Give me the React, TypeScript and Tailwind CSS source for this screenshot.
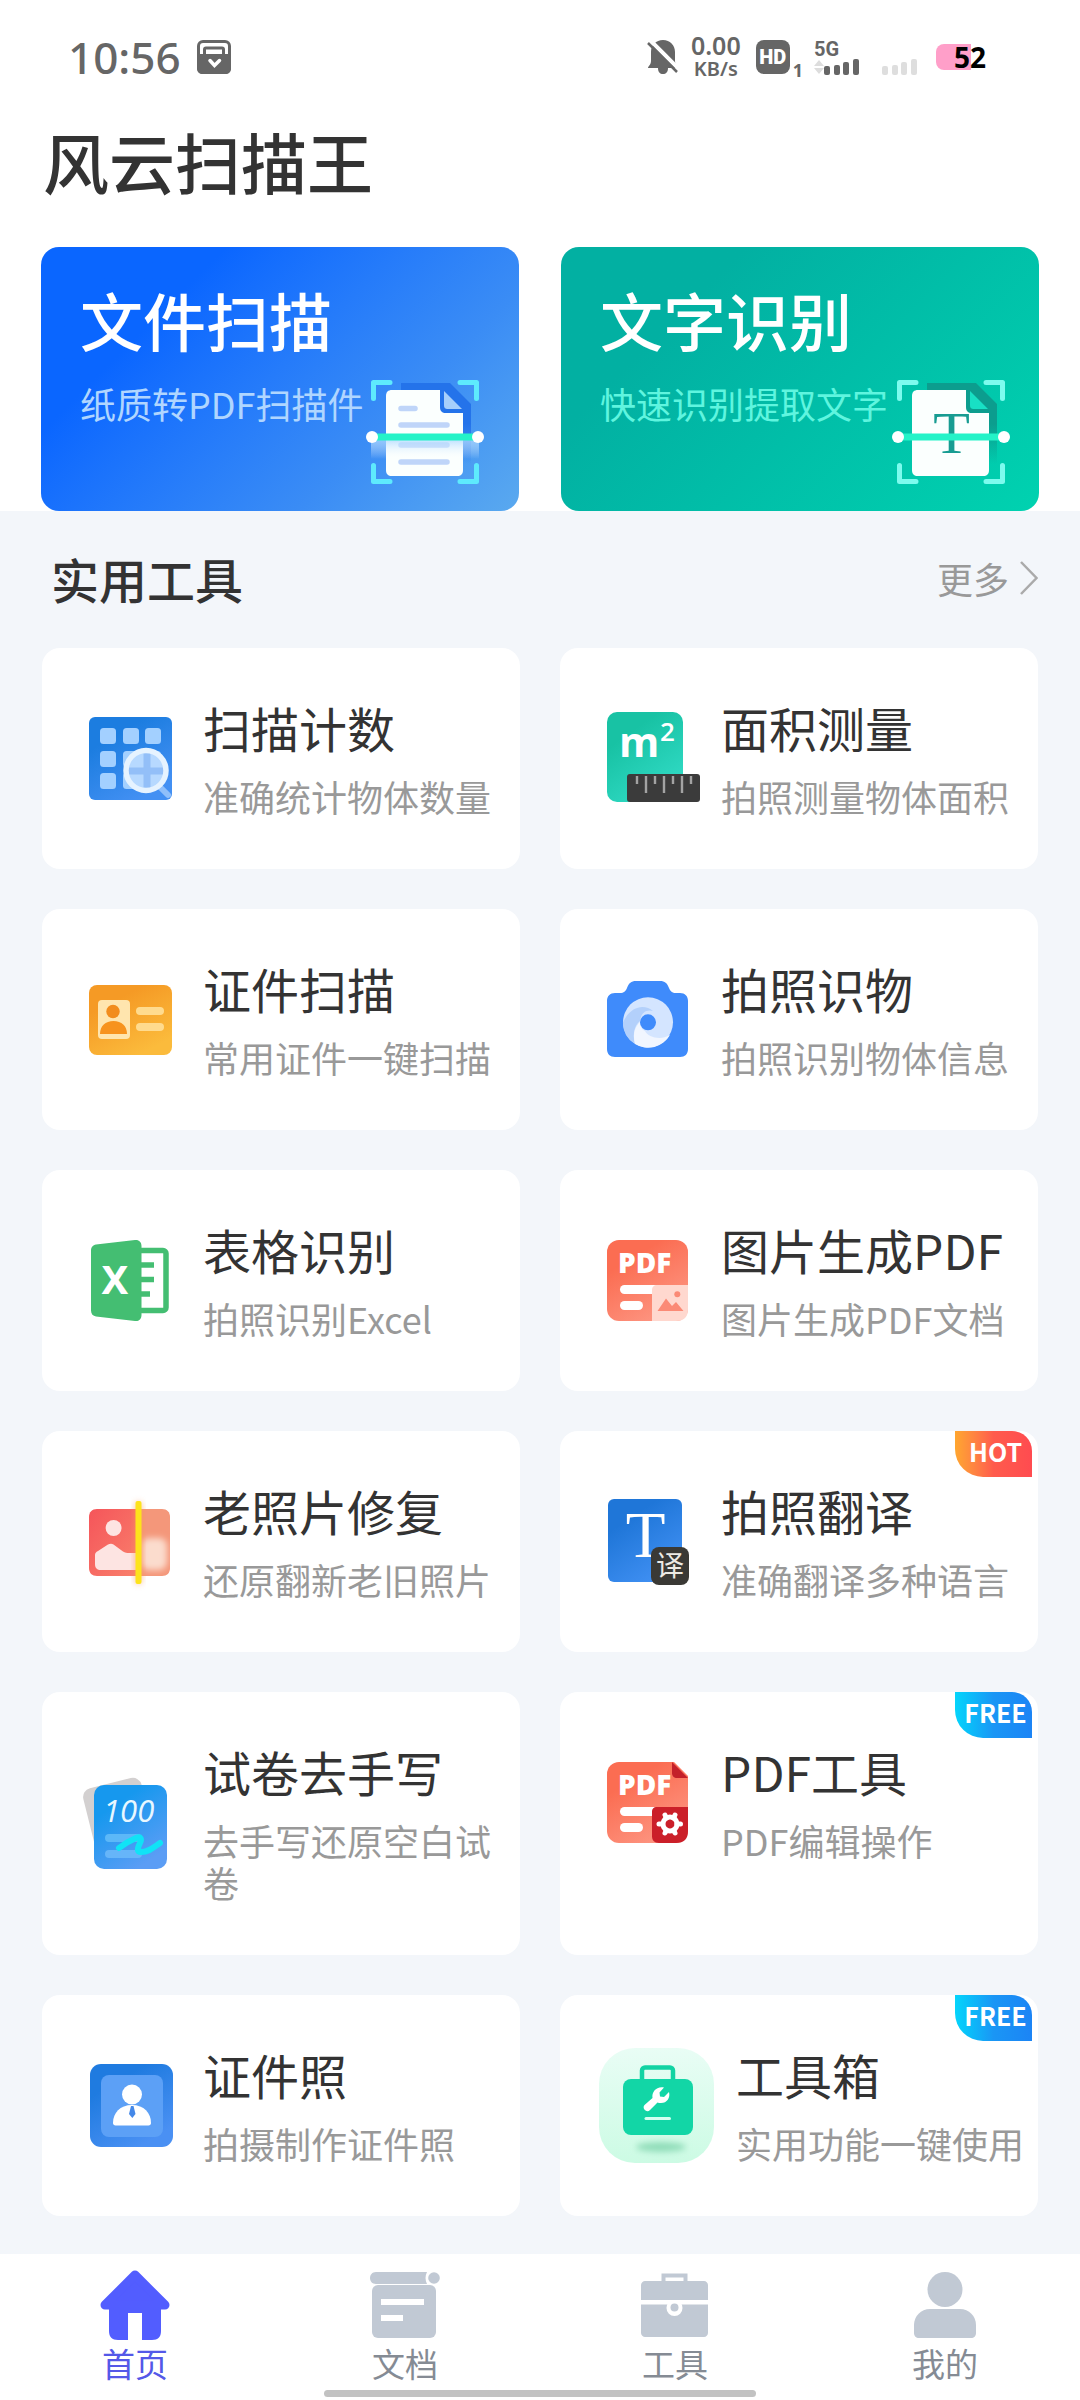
import type { ReactNode } from 'react';
import clsx from 'clsx';

type Tool = {
    title: string;
    desc: string;
    icon: ReactNode;
    badge?: 'HOT' | 'FREE';
};

function ToolSvg({ children }: { children: ReactNode }) {
    return (
        <svg viewBox="0 0 108 109" className="mr-[14px] h-[109px] w-[108px] shrink-0" aria-hidden="true">
            {children}
        </svg>
    );
}

function Gradient({ id, from, to }: { id: string; from: string; to: string }) {
    return (
        <linearGradient id={id} x1="0" y1="0" x2="0.6" y2="1">
            <stop offset="0.3" stopColor={from} />
            <stop offset="1" stopColor={to} />
        </linearGradient>
    );
}

function CountIcon() {
    const cells = [
        [19, 24],
        [42, 24],
        [64, 24],
        [19, 47],
        [42, 47],
        [64, 47],
        [19, 69],
        [42, 69],
    ];
    return (
        <ToolSvg>
            <defs>
                <Gradient id="count-bg" from="#1c7de0" to="#4390f3" />
            </defs>
            <rect x="8" y="13" width="83" height="83" rx="6" fill="url(#count-bg)" />
            {cells.map(([x, y]) => (
                <rect key={`${x}-${y}`} x={x} y={y} width="16" height="16" rx="3.5" fill="#a3d0ff" />
            ))}
            <path d="M80 84L87 91" stroke="#8fbffa" strokeWidth="6" strokeLinecap="round" />
            <circle cx="65" cy="66.5" r="20.5" fill="#b7d9ff" />
            <path d="M66 48v37M47 67h36" stroke="#93bff8" strokeWidth="7" />
            <circle cx="65" cy="66.5" r="20" fill="none" stroke="#e6f3ff" strokeWidth="5.5" />
        </ToolSvg>
    );
}

function AreaIcon() {
    return (
        <ToolSvg>
            <defs>
                <Gradient id="area-bg" from="#18c2a4" to="#30dac4" />
            </defs>
            <rect x="8" y="8" width="76" height="90" rx="10" fill="url(#area-bg)" />
            <text x="20" y="53" fontSize="41" className="fill-white font-['Open_Sans',sans-serif] font-bold">
                m
            </text>
            <text x="61" y="37" fontSize="26" className="fill-white font-['Open_Sans',sans-serif] font-semibold">
                2
            </text>
            <rect x="28" y="70" width="73" height="28" rx="3" fill="#3b3b3b" />
            <path
                d="M38 72v8M56 72v8M74 72v8M92 72v8M47 72v17M65 72v17M83 72v17"
                stroke="#a3a3a3"
                strokeWidth="2.4"
            />
        </ToolSvg>
    );
}

function LicenceIcon() {
    return (
        <ToolSvg>
            <defs>
                <Gradient id="licence-bg" from="#f59a25" to="#fbbb3c" />
            </defs>
            <rect x="8" y="20" width="83" height="70" rx="8" fill="url(#licence-bg)" />
            <rect x="17" y="35" width="32" height="39" rx="4" fill="#ffe5ae" />
            <circle cx="32" cy="46.5" r="6.7" fill="#f28c1c" />
            <path d="M19 69c0-8 5.500-13 13.500-13S46 61 46 69z" fill="#f7931e" />
            <rect x="55" y="42" width="28" height="8" rx="4" fill="#ffdb8e" />
            <rect x="55" y="58" width="28" height="8" rx="4" fill="#ffdb8e" />
        </ToolSvg>
    );
}

function CameraIcon() {
    return (
        <ToolSvg>
            <path
                d="M16 28h5c4 0 5.500-1.500 7-5 2-5 4-7 9-7h24c5 0 7 2 9 7 1.500 3.500 3 5 7 5h4c5 0 8 3 8 8v48c0 5-3 8-8 8H16c-5 0-8-3-8-8V36c0-5 3-8 8-8z"
                fill="#3f8bfb"
            />
            <circle cx="49" cy="57.3" r="25" fill="#d4e5ff" />
            <path d="M24 57.300A25 25 0 0 0 36 79c-4-14 3-22 5-23 1-8 6-12 13-10-8-7-22-6-30 11.300z" fill="#b3d0fb" />
            <path d="M36 79a25 25 0 0 0 35-9c-10 6-22 2-25-4-4-2-5-6-5-9-4 4-8 10-5 22z" fill="#f1f6ff" />
            <circle cx="49" cy="57.3" r="8" fill="#3f8bfb" />
        </ToolSvg>
    );
}

function ExcelIcon() {
    return (
        <ToolSvg>
            <rect x="50" y="24.500" width="35" height="60" rx="3" fill="#fff" stroke="#44be72" strokeWidth="5.500" />
            <path d="M60 39h13M60 53.500h13M60 68h9" stroke="#44be72" strokeWidth="5.500" />
            <path
                d="M15 18.500L54 14c4-.400 6.500 2 6.500 6v69c0 4-2.500 6.500-6.500 6L15 90.500c-3-.500-5-2.500-5-6V25c0-4 2-6 5-6.500z"
                fill="#44be72"
            />
            <text
                x="34"
                y="68"
                fontSize="40"
                textAnchor="middle"
                className="fill-white font-['Noto_Sans',sans-serif] font-bold"
            >
                X
            </text>
        </ToolSvg>
    );
}

function PdfBase({ id }: { id: string }) {
    return (
        <>
            <defs>
                <Gradient id={id} from="#fb6d52" to="#fd9480" />
            </defs>
            <rect x="8" y="14" width="81" height="81" rx="12" fill={`url(#${id})`} />
            <rect x="21" y="59" width="45" height="9" rx="4.5" fill="#fff" />
            <rect x="21" y="75" width="23" height="9" rx="4.5" fill="#fff" />
            <text x="19" y="47" fontSize="28" className="fill-white font-['Open_Sans',sans-serif] font-extrabold">
                PDF
            </text>
        </>
    );
}

function ImageToPdfIcon() {
    return (
        <ToolSvg>
            <PdfBase id="image-pdf-bg" />
            <path d="M58 59h31v24c0 8-4 12-12 12H53V64c0-3 2-5 5-5z" fill="#ffd8cf" />
            <circle cx="78.300" cy="68.300" r="3" fill="#fb8a76" />
            <path d="M58.500 85L67 72.500 73 80l4-4 7.500 9z" fill="#fb8a76" />
        </ToolSvg>
    );
}

function PdfToolIcon() {
    return (
        <ToolSvg>
            <PdfBase id="pdf-tool-bg" />
            <path d="M73 12h18v18z" fill="#fff" />
            <path d="M73 14v11c0 3 2 5 5 5h11z" fill="#c4202a" />
            <path d="M57 59h32v24c0 8-4 12-12 12H60c-5 0-7-3-7-7V63c0-2 2-4 4-4z" fill="#cb1f29" />
            <circle cx="71" cy="76" r="7" fill="none" stroke="#fff" strokeWidth="5" />
            <path
                d="M78 76h3.500M62.500 76H60M74.500 82l1.500 3M66 67l1.500 3M74.500 70l1.500-3M66 85l1.500-3"
                stroke="#fff"
                strokeWidth="5"
                strokeLinecap="round"
            />
        </ToolSvg>
    );
}

function PhotoRepairIcon() {
    return (
        <ToolSvg>
            <defs>
                <filter id="repair-blur" x="-50%" y="-50%" width="200%" height="200%">
                    <feGaussianBlur stdDeviation="3" />
                </filter>
                <linearGradient id="repair-left" x1="0" y1="0" x2="1" y2="1">
                    <stop offset="0" stopColor="#f5555a" />
                    <stop offset="1" stopColor="#f9806c" />
                </linearGradient>
                <clipPath id="repair-clip">
                    <rect x="57" y="22" width="32" height="67" rx="8" />
                </clipPath>
            </defs>
            <path d="M57 22h24c5 0 8 3 8 8v51c0 5-3 8-8 8H57z" fill="#f4977a" />
            <g clipPath="url(#repair-clip)">
                <rect x="60" y="51" width="26" height="32" rx="8" fill="#fbdccd" filter="url(#repair-blur)" />
            </g>
            <path d="M16 22h41v67H16c-5 0-8-3-8-8V30c0-5 3-8 8-8z" fill="url(#repair-left)" />
            <circle cx="32.600" cy="41" r="8" fill="#fde4e2" />
            <path d="M14 68c0-2 1-3 3-4l10-6.500c2-1 4-1 5.500 0L42 64.500c2 1.300 4 1.500 6 1.500h9v17H20c-4 0-6-2-6-6z" fill="#fde4e2" />
            <rect x="54" y="15" width="7" height="82" rx="3" fill="#fb9a5a" opacity="0.600" filter="url(#repair-blur)" />
            <rect x="54.500" y="14" width="6" height="83" rx="2" fill="#fde31c" />
        </ToolSvg>
    );
}

function TranslateIcon() {
    return (
        <ToolSvg>
            <defs>
                <Gradient id="translate-bg" from="#1f76d8" to="#3f8ff2" />
            </defs>
            <rect x="9" y="12" width="74" height="83" rx="6" fill="url(#translate-bg)" />
            <text
                x="46.500"
                y="69.500"
                fontSize="65"
                textAnchor="middle"
                className="fill-white font-['Liberation_Serif',serif]"
            >
                T
            </text>
            <rect x="52" y="60" width="38" height="38" rx="8" fill="#3a3935" />
            <text
                x="71"
                y="89"
                fontSize="28"
                textAnchor="middle"
                className="fill-[#eceae4] font-['Noto_Sans_CJK_SC',sans-serif]"
            >
                译
            </text>
        </ToolSvg>
    );
}

function PaperIcon() {
    return (
        <ToolSvg>
            <defs>
                <Gradient id="paper-bg" from="#1698ee" to="#5b9df5" />
            </defs>
            <rect x="9" y="13" width="60" height="80" rx="9" fill="#d3d0d0" transform="rotate(-14 39 53)" />
            <rect x="13" y="16" width="73" height="84" rx="10" fill="url(#paper-bg)" />
            <text x="22" y="53" fontSize="31" className="fill-[#e8f7ff] font-['Open_Sans',sans-serif] font-medium italic">
                100
            </text>
            <rect x="24" y="65" width="37" height="8" rx="4" fill="#5cb8f8" />
            <rect x="24" y="81" width="37" height="8" rx="4" fill="#66b5f9" />
            <path
                d="M38 79c5-4 10-7 17-10 5-2 6 1 4 5-3 6-3 9 1 9 8 0 13-5 19-9"
                fill="none"
                stroke="#10e3f6"
                strokeWidth="6"
                strokeLinecap="round"
                strokeLinejoin="round"
            />
        </ToolSvg>
    );
}

function IdPhotoIcon() {
    return (
        <ToolSvg>
            <defs>
                <Gradient id="id-photo-bg" from="#1f7be0" to="#4a90f3" />
            </defs>
            <rect x="9" y="13" width="83" height="83" rx="11" fill="url(#id-photo-bg)" />
            <rect x="20" y="24" width="62" height="62" rx="8" fill="#5ca0f6" />
            <circle cx="51" cy="43.500" r="10" fill="#fff" />
            <path d="M32 72c0-10 7-18 19-18s19 8 19 18c0 1.500-1 2.500-2.500 2.500h-33c-1.500 0-2.500-1-2.500-2.500z" fill="#fff" />
            <path d="M50 55h2.500l2 8-3.200 4-3.300-4z" fill="#4488e8" />
        </ToolSvg>
    );
}

function ToolboxIcon() {
    return (
        <svg viewBox="0 0 123 115" className="mr-[14px] h-[115px] w-[123px] shrink-0" aria-hidden="true">
            <defs>
                <linearGradient id="toolbox-bg" x1="0" y1="0" x2="0" y2="1">
                    <stop offset="0" stopColor="#e9fdf5" />
                    <stop offset="1" stopColor="#ccfbe4" />
                </linearGradient>
                <filter id="toolbox-blur" x="-50%" y="-100%" width="200%" height="300%">
                    <feGaussianBlur stdDeviation="3" />
                </filter>
            </defs>
            <rect width="115" height="115" rx="36" fill="url(#toolbox-bg)" />
            <ellipse cx="62" cy="99" rx="25" ry="5" fill="#8fdcb8" filter="url(#toolbox-blur)" />
            <rect x="43" y="19.500" width="31" height="26" rx="3" fill="none" stroke="#12d3a3" strokeWidth="4.500" />
            <rect x="24" y="31" width="70" height="56" rx="8" fill="#12d6a6" />
            <path
                d="M65 39.500l-4.500 5 .5 4 4 .5 5-5c1.500 6-2 11-8 11-1.500 0-2.500-.3-3.500-.6L51 62c-3 3.500-8.500-1.500-5.500-5l8-7c-1-6 4-12 11.500-10.500z"
                fill="#fff"
            />
            <path d="M47 70.500h23.500" stroke="#d5fff2" strokeWidth="3" strokeLinecap="round" />
        </svg>
    );
}

const TOOLS: Tool[] = [
    { title: '扫描计数', desc: '准确统计物体数量', icon: <CountIcon /> },
    { title: '面积测量', desc: '拍照测量物体面积', icon: <AreaIcon /> },
    { title: '证件扫描', desc: '常用证件一键扫描', icon: <LicenceIcon /> },
    { title: '拍照识物', desc: '拍照识别物体信息', icon: <CameraIcon /> },
    { title: '表格识别', desc: '拍照识别Excel', icon: <ExcelIcon /> },
    { title: '图片生成PDF', desc: '图片生成PDF文档', icon: <ImageToPdfIcon /> },
    { title: '老照片修复', desc: '还原翻新老旧照片', icon: <PhotoRepairIcon /> },
    { title: '拍照翻译', desc: '准确翻译多种语言', icon: <TranslateIcon />, badge: 'HOT' },
    { title: '试卷去手写', desc: '去手写还原空白试卷', icon: <PaperIcon /> },
    { title: 'PDF工具', desc: 'PDF编辑操作', icon: <PdfToolIcon />, badge: 'FREE' },
    { title: '证件照', desc: '拍摄制作证件照', icon: <IdPhotoIcon /> },
    { title: '工具箱', desc: '实用功能一键使用', icon: <ToolboxIcon />, badge: 'FREE' },
];

function ToolCard({ title, desc, icon, badge }: Tool) {
    return (
        <a href="#" className="relative flex items-start rounded-[18px] bg-white">
            <div className="flex min-w-0 flex-1 items-center py-[47px] pl-[39px] pr-3">
                {icon}
                <div className="min-w-0 flex-1 pb-[5px]">
                    <h3 className="text-[48px] leading-[64px] text-[#333]">{title}</h3>
                    <p className="mt-4 text-[36px] leading-[42px] text-[#999]">{desc}</p>
                </div>
            </div>
            {badge && (
                <span
                    className={clsx(
                        'absolute right-[6px] top-0 flex h-[46px] w-[77px] items-center justify-center rounded-bl-[28px] rounded-tr-[20px] bg-linear-to-r pb-1 pl-1 text-[25px] font-bold text-white',
                        badge === 'HOT' ? 'from-[#ffa62e] via-[#ff5b4c] to-[#ff4b50]' : 'from-[#05d5fb] via-[#1a96f5] to-[#1c84f5]'
                    )}
                >
                    {badge}
                </span>
            )}
        </a>
    );
}

function ScanFrame({ variant }: { variant: 'doc' | 'text' }) {
    const isDoc = variant === 'doc';
    return (
        <svg viewBox="0 0 118 108" className="h-[108px] w-[118px]" aria-hidden="true">
            <defs>
                <linearGradient id={`scan-shade-${variant}`} x1="0" y1="0" x2="0" y2="1">
                    <stop offset="0" stopColor={isDoc ? '#2473ea' : '#0c9d8e'} />
                    <stop offset="0.500" stopColor={isDoc ? '#2473ea' : '#0c9d8e'} />
                    <stop offset="1" stopColor={isDoc ? '#2473ea' : '#0c9d8e'} stopOpacity="0" />
                </linearGradient>
                <linearGradient id={`scan-glow-${variant}`} x1="0" y1="0" x2="0" y2="1">
                    <stop offset="0" stopColor="#a8d6ff" stopOpacity="0.800" />
                    <stop offset="1" stopColor="#fff" stopOpacity="0" />
                </linearGradient>
            </defs>
            <path d="M35 4h49l21 21v60H35z" fill={`url(#scan-shade-${variant})`} />
            <path d="M26 11h48v17c0 4 2 6 6 6h17v57c0 4-2 6-6 6H26c-4 0-6-2-6-6V17c0-4 2-6 6-6z" fill="#fbfffe" />
            <path d="M78 12l18 18H82c-3 0-4-1-4-4z" fill={isDoc ? '#a6cffb' : '#18e0c4'} />
            {isDoc ? (
                <>
                    <path
                        d="M35 29.500h14M35 46h46M35 66h46M35 83h46"
                        stroke="#bfd5f9"
                        strokeWidth="5.500"
                        strokeLinecap="round"
                    />
                    <rect x="5" y="60" width="108" height="20" fill="url(#scan-glow-doc)" />
                </>
            ) : (
                <text
                    x="59.500"
                    y="74"
                    fontSize="60"
                    textAnchor="middle"
                    className="fill-[#189c92] font-['Liberation_Serif',serif]"
                >
                    T
                </text>
            )}
            <path
                d="M7.500 19.500V3.500H24M94 3.500h16.500v16M7.500 86.500v16H24M94 102.500h16.500v-16"
                fill="none"
                stroke={isDoc ? '#5eeafd' : '#7dfbee'}
                strokeWidth="5"
                strokeLinecap="round"
                strokeLinejoin="round"
            />
            <path d="M6 58h106" stroke="#24f3c8" strokeWidth="7" />
            <circle cx="6" cy="58" r="6" fill="#fff" />
            <circle cx="112" cy="58" r="6" fill="#fff" />
        </svg>
    );
}

function Battery() {
    return (
        <div className="relative flex h-[26px] w-[50px] items-center justify-end">
            <div className="absolute inset-y-0 left-0 w-[35px] rounded-l-[8px] bg-[#ff9fc9]" />
            <span className="relative font-['Noto_Sans',sans-serif] text-[28px] font-bold leading-[26px] text-black">52</span>
        </div>
    );
}

function SignalBars({ color }: { color: string }) {
    return (
        <g fill={color}>
            <rect x="10" y="27" width="6" height="9" rx="2" />
            <rect x="20" y="26" width="6" height="10" rx="2" />
            <rect x="29" y="23" width="6" height="13" rx="2" />
            <rect x="39" y="20" width="6" height="16" rx="2" />
        </g>
    );
}

function StatusBar() {
    return (
        <div className="flex h-[80px] items-center justify-between pl-[68px] pr-[94px] pt-[34px] text-[#666]">
            <div className="flex items-center gap-[16px]">
                <span className="font-['Noto_Sans',sans-serif] text-[44px] font-medium leading-[46px]">10:56</span>
                <svg viewBox="0 0 34 34" className="h-[34px] w-[34px]" aria-hidden="true">
                    <rect x="1.500" y="1.500" width="31" height="31" rx="4.500" fill="none" stroke="#666" strokeWidth="3" />
                    <path d="M0 14h34v14c0 4-2 6-6 6H6c-4 0-6-2-6-6z" fill="#666" />
                    <path d="M7.500 15V9.500c0-1 .5-1.500 1.500-1.500h16c1 0 1.500.5 1.500 1.500V15" fill="none" stroke="#666" strokeWidth="3" />
                    <path d="M13 20.500l4.500 5 5-5" fill="none" stroke="#fff" strokeWidth="3.500" strokeLinecap="round" />
                </svg>
            </div>
            <div className="flex items-center">
                <svg viewBox="0 0 32 34" className="mr-[12px] h-[34px] w-[32px]" aria-hidden="true">
                    <path
                        d="M16 0c7 0 12 5 12 12v9c0 4 3 5 3 7H21c0 4-2 6-5 6s-5-2-5-6H1c0-2 3-3 3-7v-9C4 5 9 0 16 0z"
                        fill="#666"
                    />
                    <path d="M3 0l29 29" stroke="#fff" strokeWidth="4" />
                    <path d="M1 3l29 29" stroke="#666" strokeWidth="2.500" />
                </svg>
                <div className="mr-[15px] flex flex-col items-center font-['Noto_Sans',sans-serif] font-semibold">
                    <span className="text-[25px] leading-[24px]">0.00</span>
                    <span className="text-[20px] leading-[24px]">KB/s</span>
                </div>
                <div className="flex h-[34px] w-[34px] items-center justify-center rounded-[8px] bg-[#666] font-['Roboto',sans-serif] text-[20px] font-black text-white">
                    HD
                </div>
                <span className="ml-[3px] self-end font-['Noto_Sans',sans-serif] text-[18px] font-bold leading-[22px]">1</span>
                <svg viewBox="0 0 46 36" className="ml-[11px] h-[36px] w-[46px]" aria-hidden="true">
                    <text x="0" y="17" fontSize="20" fill="#666" className="font-['Roboto',sans-serif] font-bold">
                        5G
                    </text>
                    <path d="M5 21l5 6H0zM5 35l5-6H0z" fill="#ddd" />
                    <SignalBars color="#666" />
                </svg>
                <svg viewBox="0 0 46 36" className="ml-[12px] h-[36px] w-[46px]" aria-hidden="true">
                    <SignalBars color="#dedede" />
                </svg>
                <div className="ml-[18px]">
                    <Battery />
                </div>
            </div>
        </div>
    );
}

const TABS = [
    {
        label: '首页',
        icon: (
            <>
                <path
                    d="M36 5L66 35H6z"
                    fill="#525dff"
                    stroke="#525dff"
                    strokeWidth="9"
                    strokeLinejoin="round"
                />
                <path d="M10 32h52v29c0 6-3 9-9 9H43V43H29v27H19c-6 0-9-3-9-9z" fill="#525dff" />
            </>
        ),
    },
    {
        label: '文档',
        icon: (
            <>
                <path d="M7 2h51c-2 4-2 8 0 12H7C-1 14-1 2 7 2z" fill="#c1c9d4" />
                <circle cx="65" cy="8" r="5.800" fill="#c1c9d4" />
                <rect x="3" y="15" width="64" height="53" rx="6" fill="#c1c9d4" />
                <path d="M12 32h43M12 48h22" stroke="#fff" strokeWidth="6" />
            </>
        ),
    },
    {
        label: '工具',
        icon: (
            <>
                <rect x="24.500" y="5.500" width="22" height="12" fill="none" stroke="#c1c9d4" strokeWidth="4" />
                <path d="M6 11h59c2 0 4 2 4 4v15H2V15c0-2 2-4 4-4z" fill="#c1c9d4" />
                <path d="M2 34.500h67V63c0 2-2 4-4 4H6c-2 0-4-2-4-4z" fill="#c1c9d4" />
                <circle cx="35.500" cy="38" r="8" fill="#fff" />
                <circle cx="35.500" cy="37.500" r="4" fill="#c1c9d4" />
            </>
        ),
    },
    {
        label: '我的',
        icon: (
            <>
                <circle cx="36" cy="19.500" r="17.500" fill="#c1c9d4" />
                <path d="M21 39h30c9 0 16 7 16 16v8c0 3-2 5-5 5H10c-3 0-5-2-5-5v-8c0-9 7-16 16-16z" fill="#c1c9d4" />
            </>
        ),
    },
];

export default function App() {
    return (
        <div className="flex min-h-screen flex-col bg-[#f3f6fa] font-['Noto_Sans_CJK_SC',sans-serif]">
            <header className="bg-white">
                <StatusBar />
                <h1 className="mb-[47px] mt-[40px] px-[43px] text-[66px] font-medium leading-[80px] text-[#333]">
                    风云扫描王
                </h1>
                <div className="grid grid-cols-2 gap-[42px] px-[41px]">
                    <a
                        href="#"
                        className="relative h-[264px] rounded-[18px] bg-linear-135 from-[#0a66ff] from-25% via-[#3a8cf5] via-70% to-[#5aa9ef] pl-[39px] pt-8"
                    >
                        <h2 className="text-[63px] font-medium leading-[80px] text-white">文件扫描</h2>
                        <p className="mt-[23px] text-[36px] leading-[42px] text-[#b0d6ff]">纸质转PDF扫描件</p>
                        <div className="absolute bottom-6 right-[35px]">
                            <ScanFrame variant="doc" />
                        </div>
                    </a>
                    <a
                        href="#"
                        className="relative h-[264px] rounded-[18px] bg-linear-135 from-[#02b0a2] from-25% to-[#00d2b0] pl-[39px] pt-8"
                    >
                        <h2 className="text-[63px] font-medium leading-[80px] text-white">文字识别</h2>
                        <p className="mt-[23px] text-[36px] leading-[42px] text-[#5ff5df]">快速识别提取文字</p>
                        <div className="absolute bottom-6 right-[29px]">
                            <ScanFrame variant="text" />
                        </div>
                    </a>
                </div>
            </header>

            <main className="px-[42px] pb-[38px]">
                <div className="flex items-center justify-between pb-[38px] pl-[9px] pt-[35px]">
                    <h2 className="text-[48px] font-medium leading-[64px] text-[#333]">实用工具</h2>
                    <a href="#" className="flex items-center gap-[11px] text-[36px] leading-[42px] text-[#999]">
                        更多
                        <svg viewBox="0 0 18 34" className="h-[34px] w-[18px]" aria-hidden="true">
                            <path d="M1 1l15.500 16L1 33" fill="none" stroke="#aaa" strokeWidth="2.500" />
                        </svg>
                    </a>
                </div>
                <div className="grid grid-cols-2 gap-[40px]">
                    {TOOLS.map((tool) => (
                        <ToolCard key={tool.title} {...tool} />
                    ))}
                </div>
            </main>

            <nav className="mt-auto bg-white pb-[3px] pt-4">
                <div className="grid grid-cols-4">
                    {TABS.map((tab, index) => (
                        <a key={tab.label} href="#" className="flex flex-col items-center">
                            <svg viewBox="0 0 72 72" className="h-[72px] w-[72px]" aria-hidden="true">
                                {tab.icon}
                            </svg>
                            <span
                                className={clsx(
                                    'text-[33px] leading-[42px]',
                                    index === 0 ? 'text-[#5458e8]' : 'text-[#858b94]'
                                )}
                            >
                                {tab.label}
                            </span>
                        </a>
                    ))}
                </div>
                <div className="mx-auto mt-[6px] h-[7px] w-2/5 rounded-full bg-[#c2c2c2]" />
            </nav>
        </div>
    );
}
